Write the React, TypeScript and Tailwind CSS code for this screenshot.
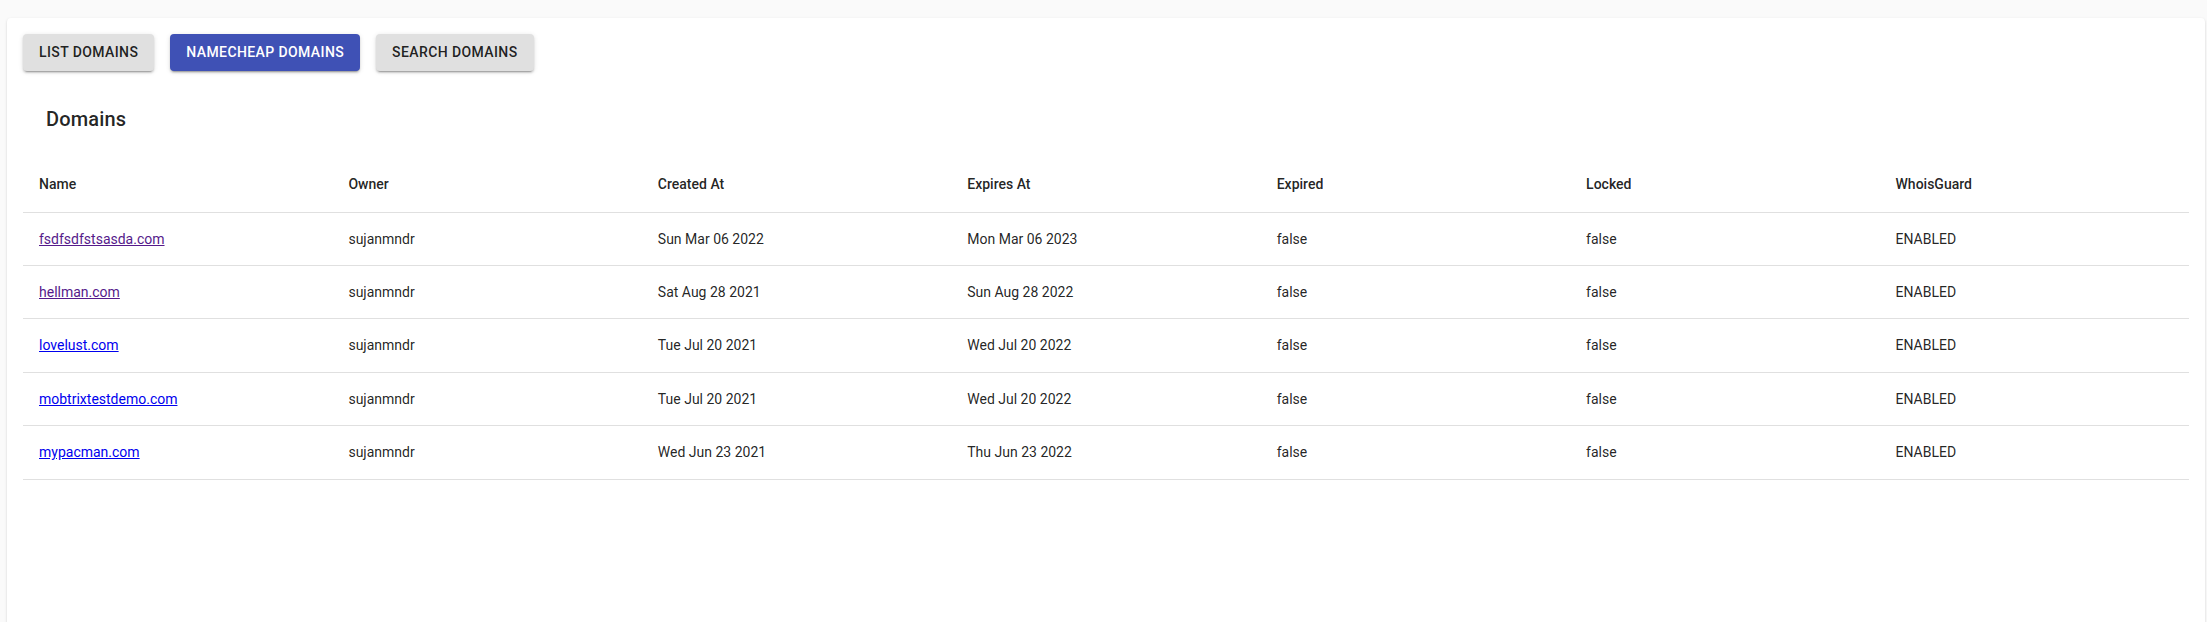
import React from 'react';

type Domain = {
  name: string;
  owner: string;
  created: string;
  expires: string;
  expired: string;
  locked: string;
  whoisGuard: string;
  visited?: boolean;
};

const domains: Domain[] = [
  { name: 'fsdfsdfstsasda.com', owner: 'sujanmndr', created: 'Sun Mar 06 2022', expires: 'Mon Mar 06 2023', expired: 'false', locked: 'false', whoisGuard: 'ENABLED', visited: true },
  { name: 'hellman.com', owner: 'sujanmndr', created: 'Sat Aug 28 2021', expires: 'Sun Aug 28 2022', expired: 'false', locked: 'false', whoisGuard: 'ENABLED', visited: true },
  { name: 'lovelust.com', owner: 'sujanmndr', created: 'Tue Jul 20 2021', expires: 'Wed Jul 20 2022', expired: 'false', locked: 'false', whoisGuard: 'ENABLED' },
  { name: 'mobtrixtestdemo.com', owner: 'sujanmndr', created: 'Tue Jul 20 2021', expires: 'Wed Jul 20 2022', expired: 'false', locked: 'false', whoisGuard: 'ENABLED' },
  { name: 'mypacman.com', owner: 'sujanmndr', created: 'Wed Jun 23 2021', expires: 'Thu Jun 23 2022', expired: 'false', locked: 'false', whoisGuard: 'ENABLED' },
];

const columns = ['Name', 'Owner', 'Created At', 'Expires At', 'Expired', 'Locked', 'WhoisGuard'];

const btnBase =
  'px-4 py-[6px] rounded-[4px] text-[14px] font-medium leading-[1.75] tracking-[0.02857em] uppercase shadow-[0_3px_1px_-2px_rgba(0,0,0,0.2),0_2px_2px_0_rgba(0,0,0,0.14),0_1px_5px_0_rgba(0,0,0,0.12)]';

const cell = 'border-b border-[#e0e0e0] p-4 leading-[20.4px]';

export default function App() {
  return (
    <div className="min-h-screen bg-[#fafafa] pt-[18px] pl-[7px] pr-[2px] font-['Roboto','Helvetica','Arial',sans-serif] text-[rgba(0,0,0,0.87)]">
      {/* Card */}
      <div className="min-h-[620px] rounded-[4px] bg-white p-4 shadow-[0_2px_1px_-1px_rgba(0,0,0,0.2),0_1px_1px_0_rgba(0,0,0,0.14),0_1px_3px_0_rgba(0,0,0,0.12)]">
        {/* Tabs as buttons */}
        <div className="flex gap-4">
          <button className={`${btnBase} bg-[#e0e0e0] text-[rgba(0,0,0,0.87)]`}>List Domains</button>
          <button className={`${btnBase} bg-[#3f51b5] text-white`}>Namecheap Domains</button>
          <button className={`${btnBase} bg-[#e0e0e0] text-[rgba(0,0,0,0.87)]`}>Search Domains</button>
        </div>

        {/* Title */}
        <h6 className="mt-8 pl-[23px] text-[20px] font-medium leading-[1.6] tracking-[0.0075em]">Domains</h6>

        {/* Table */}
        <table className="mt-[21px] w-full table-fixed border-collapse text-left text-[14px]">
          <thead>
            <tr>
              {columns.map((c) => (
                <th key={c} className="border-b border-[#e0e0e0] p-4 font-medium leading-6">
                  {c}
                </th>
              ))}
            </tr>
          </thead>
          <tbody>
            {domains.map((d) => (
              <tr key={d.name}>
                <td className={cell}>
                  <a href="#" className={`underline ${d.visited ? 'text-[#551a8b]' : 'text-[#0000ee]'}`}>
                    {d.name}
                  </a>
                </td>
                <td className={cell}>{d.owner}</td>
                <td className={cell}>{d.created}</td>
                <td className={cell}>{d.expires}</td>
                <td className={cell}>{d.expired}</td>
                <td className={cell}>{d.locked}</td>
                <td className={cell}>{d.whoisGuard}</td>
              </tr>
            ))}
          </tbody>
        </table>
      </div>
    </div>
  );
}
